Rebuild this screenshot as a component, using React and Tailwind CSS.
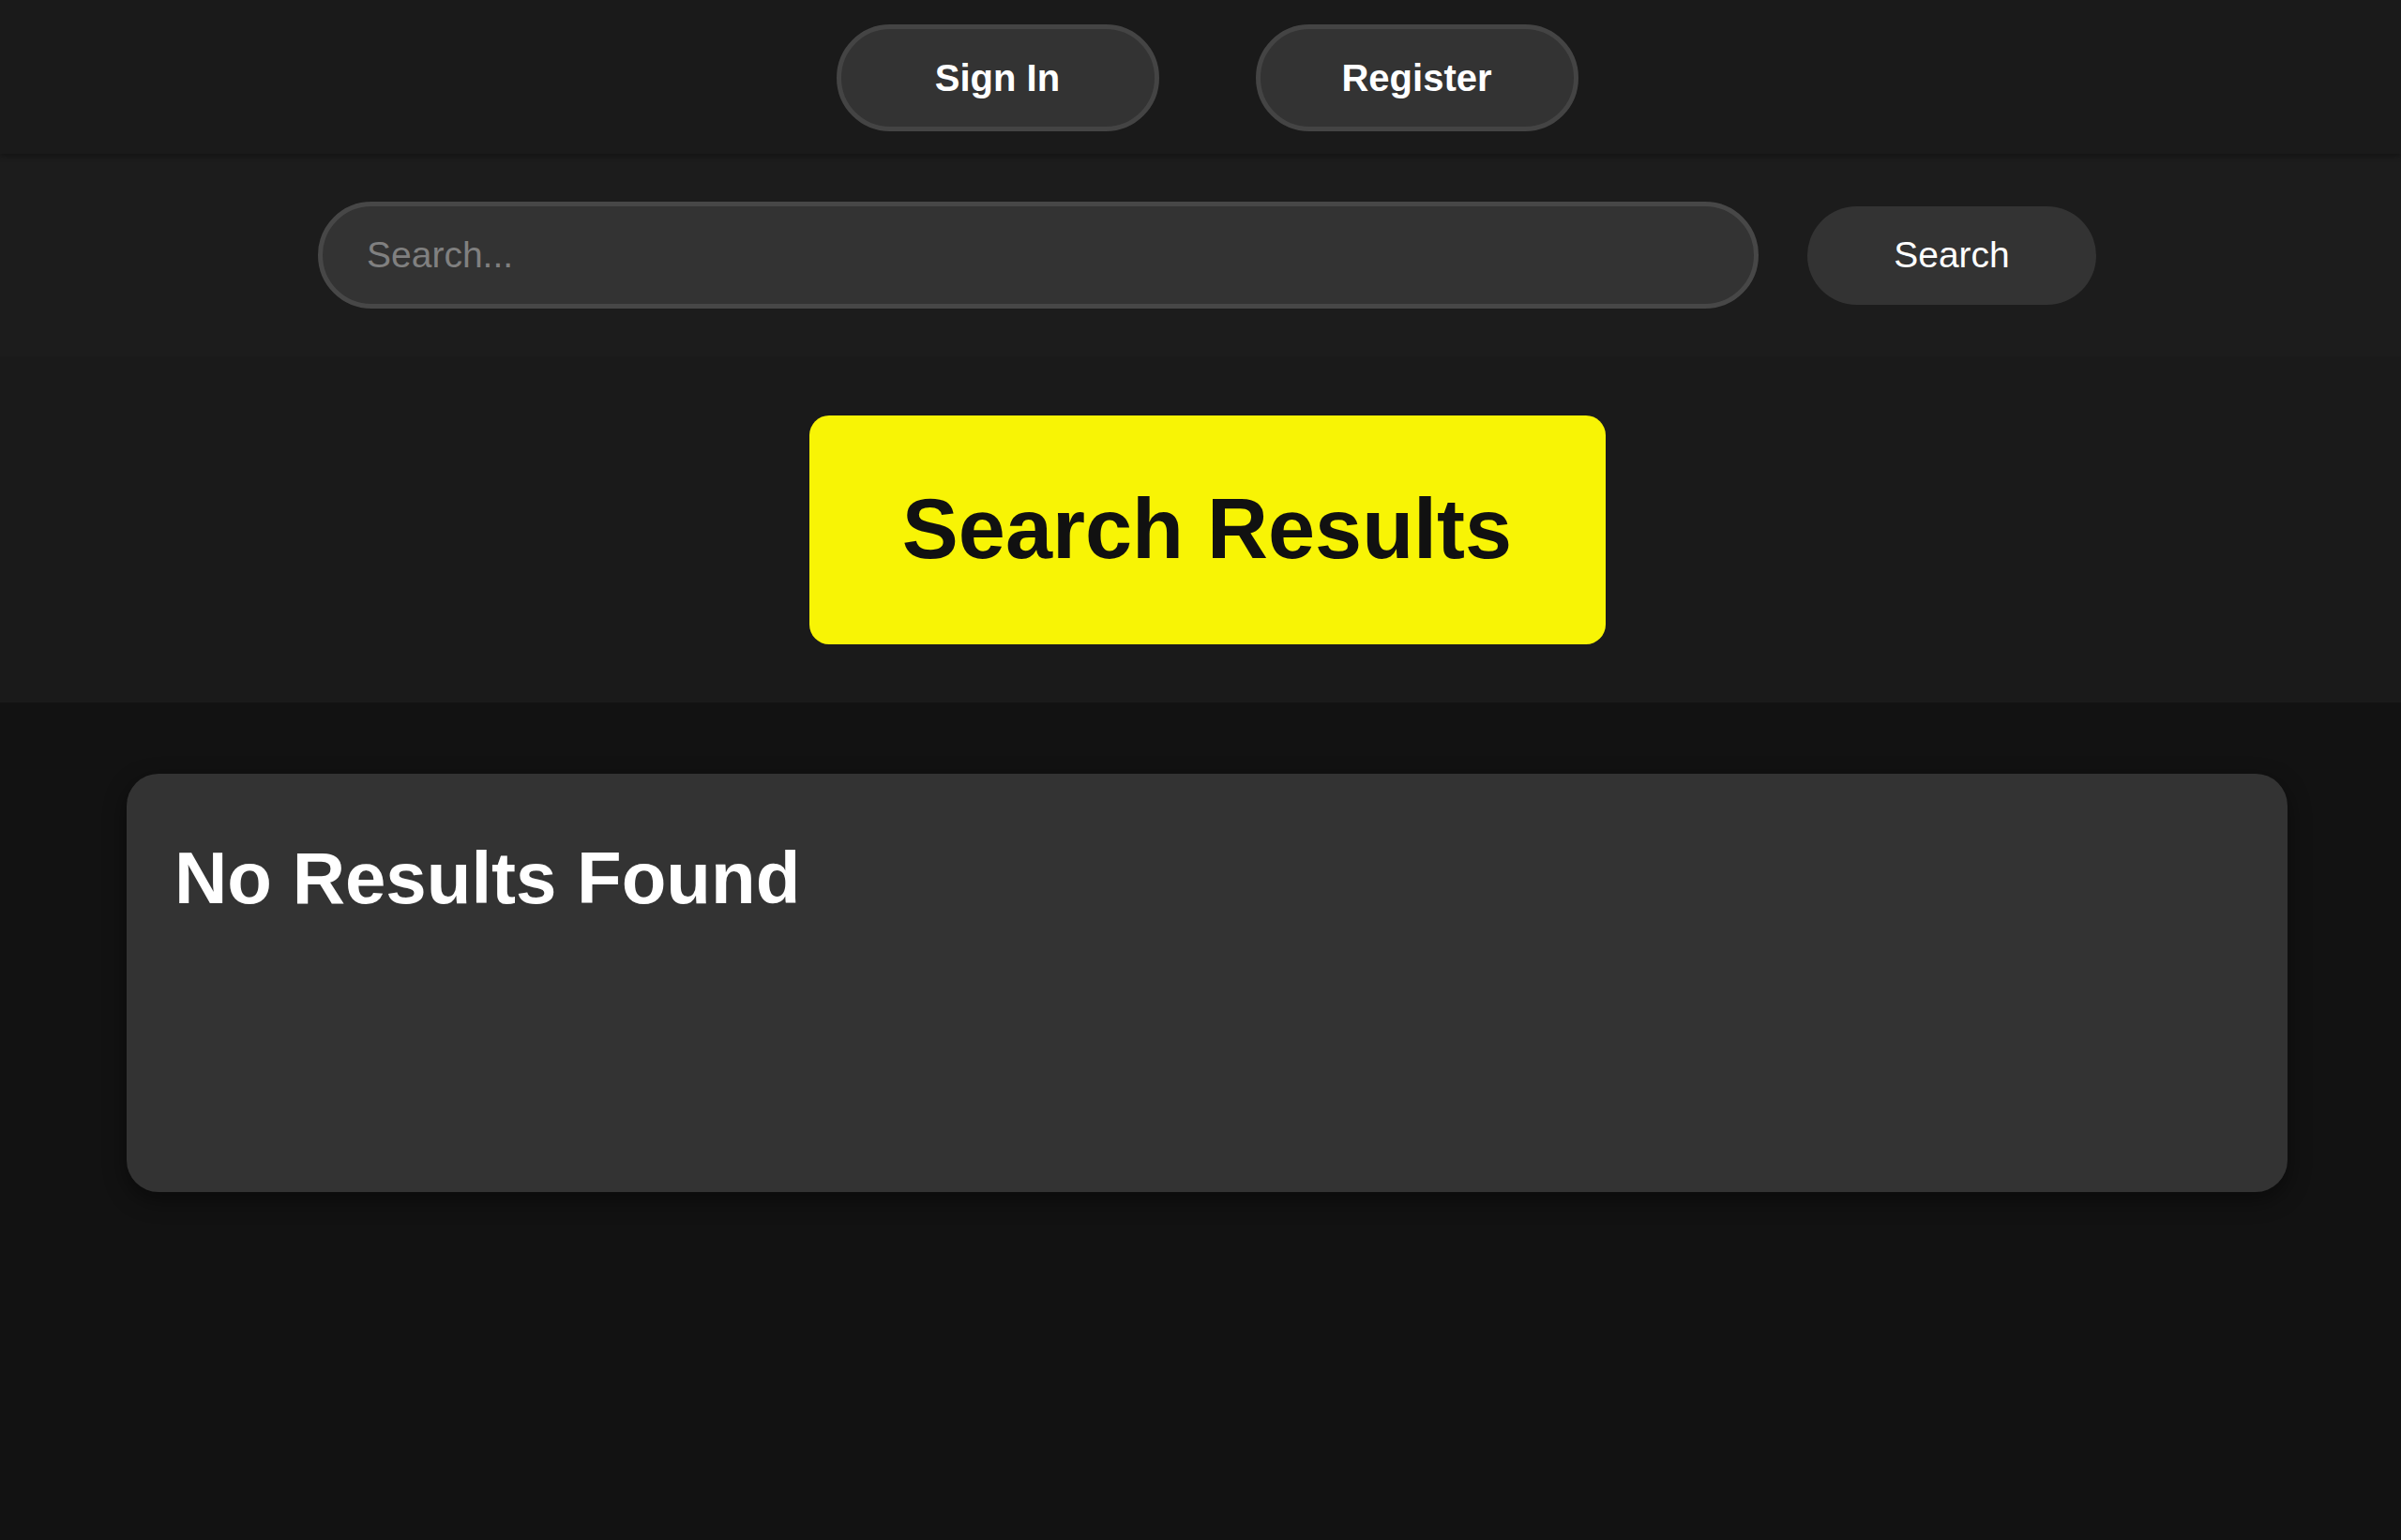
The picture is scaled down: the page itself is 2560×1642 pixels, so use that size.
import React, { useState } from 'react';

const App = () => {
  const [query, setQuery] = useState('');
  const results = [];

  const handleSubmit = (e) => {
    e.preventDefault();
  };

  return (
    <div className="min-h-[1642px] bg-[#121212] font-['Liberation_Sans',Arial,sans-serif] text-white">
      {/* top nav */}
      <header className="relative z-10 flex h-[164px] items-center justify-center gap-[103px] bg-[#1a1a1a] pt-[2px] pl-[14px] shadow-[0_2px_6px_rgba(0,0,0,0.35)]">
        <button className="h-[114px] w-[344px] rounded-full border-[5px] border-[#444] bg-[#333] text-[40px] font-bold text-white">
          Sign In
        </button>
        <button className="h-[114px] w-[344px] rounded-full border-[5px] border-[#444] bg-[#333] text-[40px] font-bold text-white">
          Register
        </button>
      </header>

      {/* search bar */}
      <form
        onSubmit={handleSubmit}
        className="flex h-[216px] items-center justify-center gap-[52px] bg-[#1c1c1c] pl-[14px]"
      >
        <input
          type="text"
          value={query}
          onChange={(e) => setQuery(e.target.value)}
          placeholder="Search..."
          className="h-[114px] w-[1536px] rounded-full border-[5px] border-[#474747] bg-[#333] px-[47px] text-[39px] text-white outline-none placeholder:text-[#808080]"
        />
        <button
          type="submit"
          className="h-[105px] w-[308px] rounded-full bg-[#333] text-[39px] text-white"
        >
          Search
        </button>
      </form>

      {/* heading */}
      <section className="flex h-[369px] items-center justify-center bg-[#1a1a1a] pl-[14px]">
        <div className="flex h-[244px] w-[849px] items-center justify-center rounded-[21px] bg-[#f8f405]">
          <h1 className="text-[90px] font-bold text-[#111]">Search Results</h1>
        </div>
      </section>

      {/* results */}
      <main className="pt-[76px] pl-[135px]">
        <div className="h-[446px] w-[2304px] rounded-[34px] bg-[#333] px-[51px] pt-[67px] shadow-[0_8px_24px_rgba(0,0,0,0.45)]">
          {results.length === 0 ? (
            <h2 className="text-[78px] font-bold leading-[1.15] text-white">No Results Found</h2>
          ) : (
            results.map((r) => <p key={r.id}>{r.name}</p>)
          )}
        </div>
      </main>
    </div>
  );
};

export default App;
